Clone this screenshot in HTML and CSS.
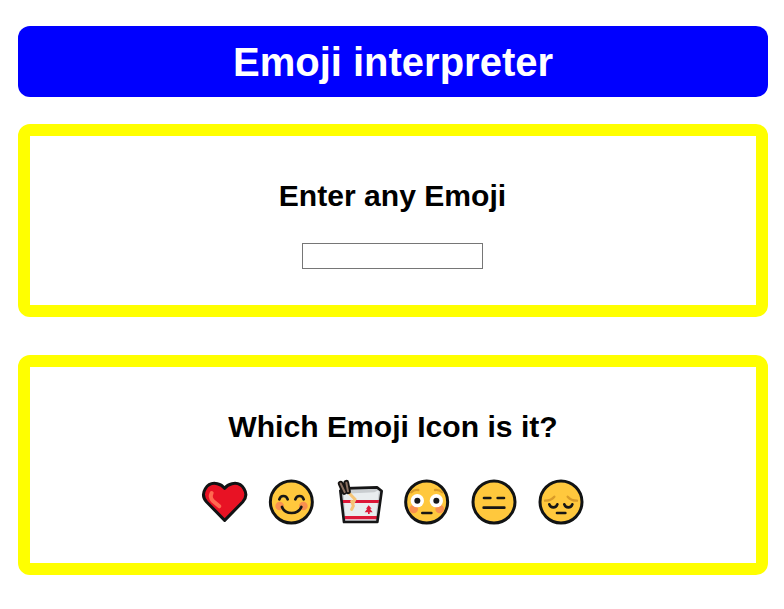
FILE: index.html
```html
<!DOCTYPE html>
<html lang="en">
<head>
<meta charset="utf-8">
<title>Emoji interpreter</title>
<link rel="stylesheet" href="styles.css">
</head>
<body>
<h1 class="banner">Emoji interpreter</h1>
<section class="panel entry">
  <h2>Enter any Emoji</h2>
  <input class="emoji-input" type="text" aria-label="Emoji">
</section>
<section class="panel gallery">
  <h2>Which Emoji Icon is it?</h2>
  <div class="emoji-list">
    <svg class="emoji" viewBox="0 0 180 168">
      <path class="outline heart" d="M86 139 L32 84 Q15 65 28 44 Q40 24 64 29 Q78 32 86 43 Q94 32 108 29 Q132 24 144 44 Q157 65 140 84 Z"/>
      <path d="M47 57Q40 70 51 81L70 97" fill="none" stroke="#ff6a50" stroke-width="12" stroke-linecap="round"/>
    </svg>
    <svg class="emoji" viewBox="0 0 180 168">
      <circle class="outline face" cx="85" cy="84" r="63"/>
      <circle class="blush" cx="50" cy="96" r="13"/><circle class="blush" cx="121" cy="96" r="13"/>
      <path class="line" d="M49 76Q52 66 61 66Q71 66 74 76M97 76Q100 66 110 66Q119 66 122 76M57 99Q64 117 86 117Q107 117 115 99"/>
    </svg>
    <svg class="emoji" viewBox="0 0 180 168">
      <path class="carton" d="M28 50L43 43L138 40L152 51L139 144H39Z"/>
      <path d="M38 59L130 55L144 48L133 138H44Z" fill="#e9edef"/>
      <path d="M33 78H144L143 87H34ZM40 126H139L138 136H41Z" fill="#dc1738"/>
      <path class="carton-edge" d="M28 50L43 43L138 40L152 51L139 144H39Z"/>
      <path d="M54 57L72 76L66 88M62 82L67 96L62 106" fill="none" stroke="#f5c475" stroke-width="9" stroke-linecap="round"/>
      <path d="M29 29L40 54M46 26L51 52" stroke="#171413" stroke-width="17" stroke-linecap="round"/>
      <path d="M29 29L41 54M46 26L51 52" stroke="#8c7163" stroke-width="6" stroke-linecap="round"/>
      <path d="M113 94L122 104H117L125 115H116V120H111V115H101L109 104H105Z" fill="#dc1738"/>
    </svg>
    <svg class="emoji" viewBox="0 0 180 168">
      <circle class="outline face" cx="86" cy="84" r="63"/>
      <circle class="blush" cx="47" cy="105" r="13"/><circle class="blush" cx="125" cy="105" r="13"/>
      <circle cx="58" cy="80" r="20" fill="#fff"/><circle cx="115" cy="80" r="20" fill="#fff"/>
      <circle cx="58" cy="80" r="9" fill="#17191b"/><circle cx="115" cy="80" r="9" fill="#17191b"/>
      <path class="brow" d="M39 55Q49 46 61 48M111 48Q123 46 133 55"/>
      <path class="line" d="M73 117H100"/>
    </svg>
    <svg class="emoji" viewBox="0 0 180 168">
      <circle class="outline face" cx="87" cy="84" r="63"/>
      <path class="line" d="M57 72H76M98 72H117M56 101H118"/>
    </svg>
    <svg class="emoji" viewBox="0 0 180 168">
      <circle class="outline face" cx="87" cy="84" r="63"/>
      <path class="brow" d="M39 80Q57 80 67 68M107 68Q117 80 135 80"/>
      <path class="line" d="M52 91Q55 100 64 100Q73 100 76 91M97 91Q100 100 109 100Q118 100 121 91M75 117H100"/>
    </svg>
  </div>
</section>
</body>
</html>
```
FILE: styles.css
```css
* {
  box-sizing: border-box;
}

body {
  margin: 0;
  padding: 26px 16px 0 18px;
  background: #fff;
  color: #000;
  font-family: "Liberation Sans", Arial, sans-serif;
  text-align: center;
}

.banner {
  height: 71px;
  margin: 0 0 27px;
  border-radius: 12px;
  background: #00f;
  color: #fff;
  font-size: 40px;
  line-height: 73px;
}

.panel {
  border: 12px solid #ff0;
  border-radius: 12px;
  padding-top: 42px;
}

.panel h2 {
  margin: 0;
  font-size: 30.1px;
  line-height: 35px;
}

.entry {
  height: 193px;
  margin-bottom: 38px;
  padding-right: 1px;
}

.emoji-input {
  display: block;
  width: 181px;
  height: 26px;
  margin: 30px auto 0;
  border: 1px solid #767676;
  border-radius: 0;
  background: #fff;
  font: 17px "Liberation Sans", Arial, sans-serif;
}

.gallery {
  height: 220px;
}

.emoji-list {
  display: flex;
  justify-content: center;
  gap: 7.3px;
  margin-top: 30px;
  padding-left: 2.5px;
}

.emoji {
  width: 60px;
  height: 56px;
}

.outline {
  stroke: #111314;
  stroke-width: 9;
  stroke-linejoin: round;
}

.heart {
  fill: #e81224;
}

.face {
  fill: #ffc83d;
}

.blush {
  fill: #f9904f;
}

.line {
  fill: none;
  stroke: #171615;
  stroke-width: 8;
  stroke-linecap: round;
}

.brow {
  fill: none;
  stroke: #d99b28;
  stroke-width: 7;
  stroke-linecap: round;
}

.carton {
  fill: #c9cdd0;
}

.carton-edge {
  fill: none;
  stroke: #151516;
  stroke-width: 8;
  stroke-linejoin: round;
}
```
